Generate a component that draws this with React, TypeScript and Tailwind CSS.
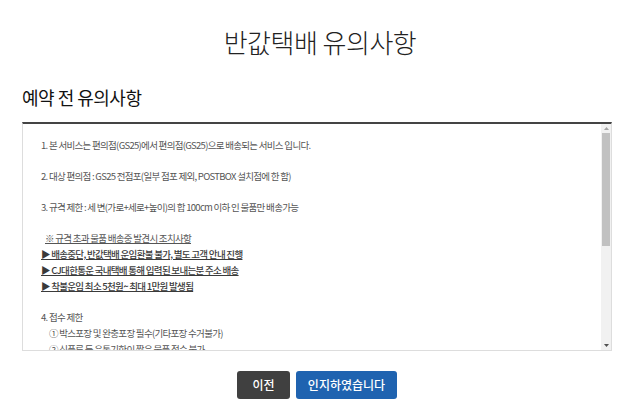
import React from "react";

const font = { fontFamily: '"Noto Sans CJK KR", "Noto Sans", sans-serif' };

export default function App() {
  return (
    <div className="w-[640px] h-[401px] bg-white overflow-hidden" style={font}>
      <div className="h-[84px] flex items-start justify-center pt-[24px]">
        <h1 className="text-[26px] leading-[36px] font-light text-[#222] tracking-[-0.5px]">반값택배 유의사항</h1>
      </div>
      <div className="ml-[22px] w-[590px]">
        <h2 className="text-[18px] leading-[26px] text-[#111] tracking-[-0.5px] h-[38px]">예약 전 유의사항</h2>
        <div className="h-[229px] border-t-2 border-t-[#444] border-x border-b border-[#ddd] flex">
          <div className="flex-1 overflow-hidden pl-[18px] pt-[13px] text-[9.5px] leading-[16px] text-[#555] tracking-[-0.7px]">
            <p className="h-[31px]">1. 본 서비스는 편의점(GS25)에서 편의점(GS25)으로 배송되는 서비스 입니다.</p>
            <p className="h-[31px]">2. 대상 편의점 : GS25 전점포(일부 점포 제외, POSTBOX 설치점에 한 함)</p>
            <p className="h-[31px]">3. 규격 제한 : 세 변(가로+세로+높이)의 합 100cm 이하 인 물품만 배송가능</p>
            <p className="h-[16px] pl-[4px] underline text-[#555]">※ 규격 초과 물품 배송중 발견시 조치사항</p>
            <p className="h-[16px] underline text-[#3a3a3a] font-medium">▶ 배송중단, 반값택배 운임환불 불가, 별도 고객 안내 진행</p>
            <p className="h-[16px] underline text-[#3a3a3a] font-medium">▶ CJ대한통운 국내택배 통해 입력된 보내는분 주소 배송</p>
            <p className="h-[16px] underline text-[#3a3a3a] font-medium">▶ 착불운임 최소 5천원~ 최대 1만원 발생됨</p>
            <p className="h-[15px]"></p>
            <p className="h-[16px]">4. 접수 제한</p>
            <p className="h-[16px] pl-[8px]">① 박스포장 및 완충포장 필수(기타포장 수거불가)</p>
            <p className="h-[16px] pl-[8px]">② 식품류 등 유통기한이 짧은 물품 접수 불가</p>
          </div>
          <div className="w-[10px] bg-[#f1f1f1] flex flex-col items-center">
            <div className="h-[9px] flex items-center justify-center">
              <svg width="5" height="3" viewBox="0 0 5 3"><path d="M2.5 0L5 3H0z" fill="#a3a3a3" /></svg>
            </div>
            <div className="w-[8px] h-[113px] bg-[#c1c1c1]"></div>
            <div className="flex-1"></div>
            <div className="h-[9px] flex items-center justify-center">
              <svg width="5" height="3" viewBox="0 0 5 3"><path d="M0 0H5L2.5 3z" fill="#505050" /></svg>
            </div>
          </div>
        </div>
      </div>
      <div className="flex justify-center gap-[6px] mt-[20px] pr-[6px]">
        <button className="w-[53px] h-[28px] rounded-[3px] bg-[#404040] text-white text-[12px] font-medium">이전</button>
        <button className="w-[101px] h-[28px] rounded-[3px] bg-[#1f63b0] text-white text-[12px] font-medium">인지하였습니다</button>
      </div>
    </div>
  );
}
